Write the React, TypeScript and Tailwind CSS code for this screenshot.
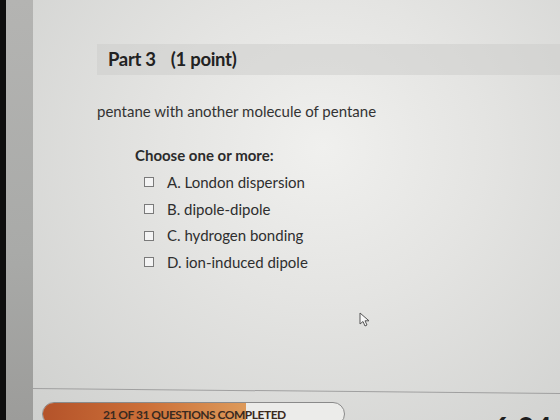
import React from "react";

const options = [
  { key: "A", label: "London dispersion" },
  { key: "B", label: "dipole-dipole" },
  { key: "C", label: "hydrogen bonding" },
  { key: "D", label: "ion-induced dipole" },
];

export default function App() {
  return (
    <div
      className="w-[560px] h-[420px] flex overflow-hidden text-[#2a2a2a]"
      style={{ fontFamily: "Lato, 'Open Sans', sans-serif" }}
    >
      {/* screen bezel */}
      <div className="w-[6px] shrink-0 bg-[#0e0e0e]" />
      <div className="w-[27px] shrink-0 bg-[linear-gradient(180deg,#b4b4b2,#a9aaa8_60%,#9c9c9a)]" />

      {/* quiz page */}
      <div className="relative flex-1 flex flex-col bg-[radial-gradient(ellipse_at_55%_35%,#f0f0ee_0%,#e4e4e2_40%,#cfd0ce_100%)]">
        <div className="pt-[44px] pl-[64px]">
          <div className="h-[31px] flex items-center pl-[11px] bg-[#cbcbc9]/50 text-[18.5px] font-bold tracking-[-0.3px] text-[#222]">
            <span>Part 3</span>
            <span className="ml-[15px]">(1 point)</span>
          </div>

          <p className="mt-[26px] text-[15px] leading-[20px] text-[#333]">
            pentane with another molecule of pentane
          </p>

          <div className="mt-[24px] ml-[38px]">
            <p className="text-[15px] leading-[20px] font-bold text-[#2c2c2c]">
              Choose one or more:
            </p>
            <ul className="mt-[4px] ml-[9px] flex flex-col">
              {options.map((o) => (
                <li key={o.key} className="h-[26.7px] flex items-center gap-[13px] text-[15px] text-[#2e2e2e]">
                  <span className="w-[10px] h-[10px] border border-[#7a7a7a] bg-[#f4f4f4]" />
                  <span>
                    {o.key}. {o.label}
                  </span>
                </li>
              ))}
            </ul>
          </div>
        </div>

        {/* footer with progress, runs past the bottom edge */}
        <div className="mt-auto h-[32px] shrink-0">
          <div className="h-px bg-[#a0a0a0] rotate-[0.55deg] origin-left" />
          <div className="mt-[13px] flex items-start">
            <div className="ml-[9px] w-[303px] h-[24px] relative rounded-full border border-[#8a8a8a] overflow-hidden bg-[#ececea]">
              <div className="h-full w-[203px] bg-[linear-gradient(90deg,#b4532a,#cc6f38_50%,#dd9a5a)]" />
              <span className="absolute left-[60px] top-[5px] text-[12px] leading-[14px] font-bold tracking-[-0.5px] text-[#3a2a20] whitespace-nowrap">
                21 OF 31 QUESTIONS COMPLETED
              </span>
            </div>
            <span className="ml-auto mr-[8px] mt-[10px] text-[30px] font-bold leading-none text-[#1e1e1e]">
              6:04
            </span>
          </div>
        </div>

        {/* mouse pointer */}
        <svg className="absolute left-[326px] top-[312px]" width="12" height="16" viewBox="0 0 12 16">
          <path d="M1 1 L1 12 L4 9.5 L6 14 L8 13 L6 8.8 L10 8.8 Z" fill="#f8f8f8" stroke="#555" strokeWidth="1" strokeLinejoin="round" />
        </svg>
      </div>
    </div>
  );
}
